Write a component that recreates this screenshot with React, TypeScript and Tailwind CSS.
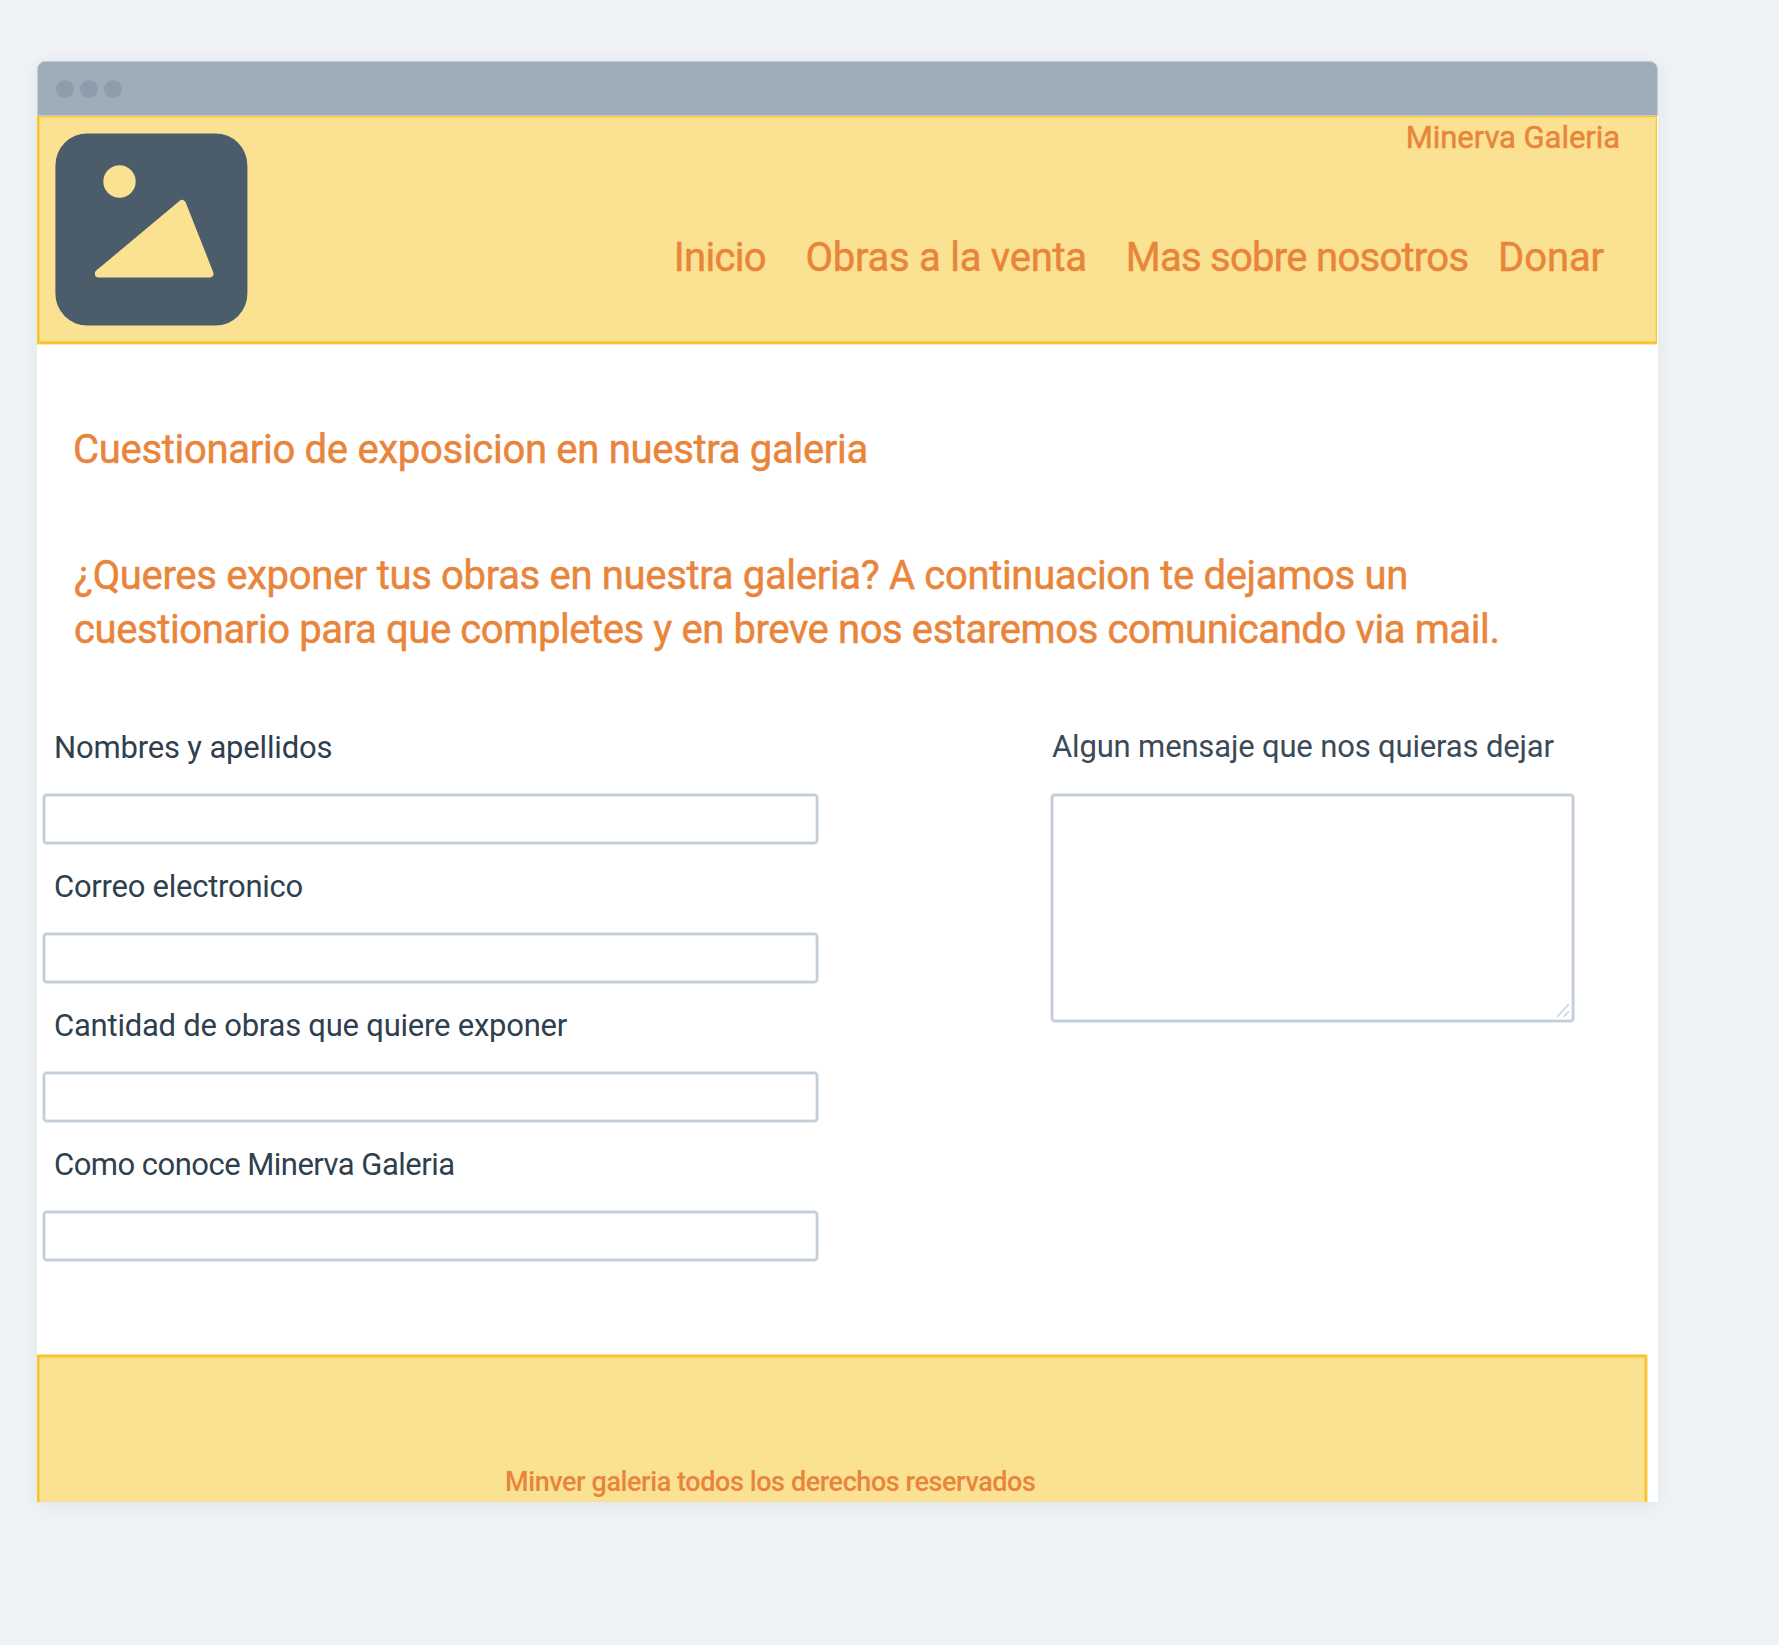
type FieldProps = { label: string; labelClass: string; className?: string };

const inputClass =
  "block rounded-[4px] border-2 border-[#c3cdd7] bg-white shadow-[0_0_0_1px_#e3e8ed,inset_0_0_0_1px_#e9edf1] outline-none";

function Field({ label, labelClass, className = "" }: FieldProps) {
  return (
    <label className={`block ${className}`}>
      <span className={`block pl-[11px] text-[31px] leading-[48px] whitespace-nowrap text-[#2f3f4e] ${labelClass}`}>
        {label}
      </span>
      <input type="text" className={`mt-[22px] h-[50px] w-[775px] px-3 text-2xl ${inputClass}`} />
    </label>
  );
}

function Logo() {
  return (
    <svg width="193" height="193" viewBox="0 0 193 193" className="block shrink-0">
      <rect x="0.4" y="0.4" width="192" height="192.2" rx="32" fill="#4b5c6a" />
      <circle cx="64.5" cy="48.5" r="16.2" fill="#fbe192" />
      <path
        d="M43.8 140.6 L127 71 L154.5 140.6 Z"
        fill="#fbe192"
        stroke="#fbe192"
        strokeWidth="8"
        strokeLinejoin="round"
      />
    </svg>
  );
}

export default function App() {
  return (
    <div className="min-h-[1645px] bg-[#eff3f6] pt-[61px] pl-[37px] font-['Roboto',sans-serif] text-[#e8853b]">
      <div className="flex h-[1441px] w-[1621px] flex-col rounded-t-[8px] bg-white shadow-[0_3px_20px_rgba(30,45,60,0.07)]">
        <div className="flex h-[55px] shrink-0 items-center gap-[6px] rounded-t-[8px] border border-[#c3ccd5] bg-[#9eadb9] pl-[17.5px]">
          <span className="size-[18px] rounded-full bg-[#8d9dac]" />
          <span className="size-[18px] rounded-full bg-[#8d9dac]" />
          <span className="size-[18px] rounded-full bg-[#8d9dac]" />
        </div>

        <header className="mr-px flex h-[228px] shrink-0 border-t border-r border-b-2 border-l-2 border-[#f7c42b] bg-[#fbe192] pt-[16px] pl-[16px] shadow-[0_1px_0_#fbe8ae,inset_1px_-1px_0_#fad05a,inset_-1px_1px_0_#fad974]">
          <Logo />
          <div className="ml-auto flex flex-col items-end [-webkit-text-stroke:0.5px_#e8853b]">
            <div className="-mt-[19px] mr-[36px] text-[31px] leading-[48px] tracking-[-0.06px] whitespace-nowrap">
              Minerva Galeria
            </div>
            <nav className="mt-[72px] mr-[52px] flex text-[40px] leading-[48px] whitespace-nowrap">
              <a className="w-[131.7px] tracking-[-0.67px]">Inicio</a>
              <a className="w-[320.3px] tracking-[-0.25px]">Obras a la venta</a>
              <a className="w-[372.3px] tracking-[-0.72px]">Mas sobre nosotros</a>
              <a className="tracking-[-0.1px]">Donar</a>
            </nav>
          </div>
        </header>

        <main className="h-[1011px] shrink-0 pt-[79px]">
          <h1 className="pl-[36px] text-[40px] leading-[54px] tracking-[-0.295px] [-webkit-text-stroke:0.5px_#e8853b]">
            Cuestionario de exposicion en nuestra galeria
          </h1>
          <p className="mt-[72px] pl-[37px] text-[40px] leading-[54px] whitespace-nowrap [-webkit-text-stroke:0.5px_#e8853b]">
            <span className="block tracking-[-0.32px]">
              ¿Queres exponer tus obras en nuestra galeria? A continuacion te dejamos un
            </span>
            <span className="block tracking-[-0.395px]">
              cuestionario para que completes y en breve nos estaremos comunicando via mail.
            </span>
          </p>

          <form className="mt-[67px] flex pl-[6px]">
            <div className="w-[1008px]">
              <Field label="Nombres y apellidos" labelClass="tracking-[-0.17px]" />
              <Field label="Correo electronico" labelClass="tracking-[-0.26px]" className="mt-[18.5px]" />
              <Field label="Cantidad de obras que quiere exponer" labelClass="tracking-[-0.23px]" className="mt-[19.5px]" />
              <Field label="Como conoce Minerva Galeria" labelClass="tracking-[-0.52px]" className="mt-[19px]" />
            </div>
            <label className="-mt-[1px] block">
              <span className="block pl-px text-[31px] leading-[48px] tracking-[-0.16px] whitespace-nowrap text-[#3b4a58]">
                Algun mensaje que nos quieras dejar
              </span>
              <span className="relative mt-[23px] block">
                <textarea className={`h-[228px] w-[523px] resize-none p-3 text-2xl ${inputClass}`} />
                <svg width="14" height="15" viewBox="0 0 14 15" className="absolute right-[4px] bottom-[4px]">
                  <path d="M1 14 L13 1 M7.5 14 L13 8" fill="none" stroke="#c9d3dc" strokeWidth="1.5" />
                </svg>
              </span>
            </label>
          </form>
        </main>

        <footer className="mr-[11px] flex-1 border-t-2 border-r-2 border-l-2 border-[#f7c42b] bg-[#fbe192] pt-[105px] pl-[466px] shadow-[0_-1px_0_#fbe08c,1px_0_0_#fbe8ae,inset_1px_1px_0_#fad160,inset_-1px_0_0_#fad160]">
          <p className="text-[27px] leading-[40px] font-medium tracking-[-0.417px] whitespace-nowrap">
            Minver galeria todos los derechos reservados
          </p>
        </footer>
      </div>
    </div>
  );
}
